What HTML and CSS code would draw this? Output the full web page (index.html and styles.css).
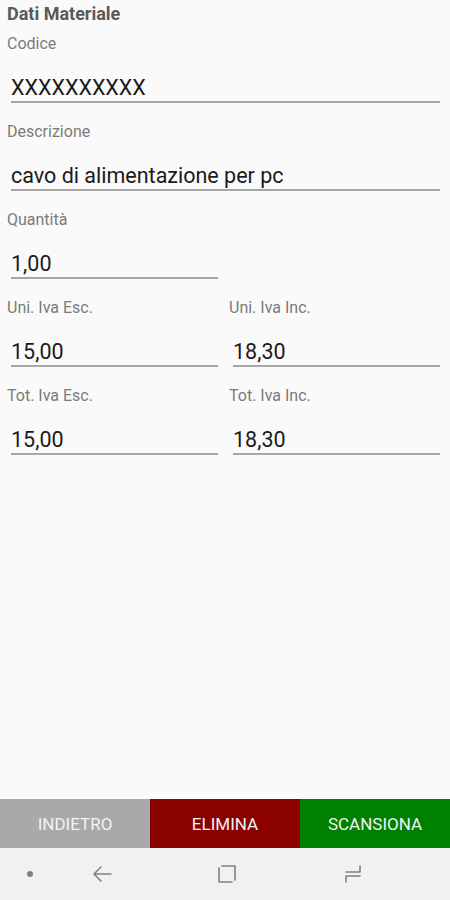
FILE: index.html
```html
<!DOCTYPE html>
<html lang="it">

<head>
    <meta charset="UTF-8">
    <meta name="viewport" content="width=device-width, initial-scale=1.0">
    <title>Dati Materiale</title>
    <link rel="stylesheet" href="styles.css">
</head>

<body>
    <div class="screen">
        <div class="content">
            <h1 class="title">Dati Materiale</h1>

            <div class="field">
                <label>Codice</label>
                <div class="value">XXXXXXXXXX</div>
            </div>

            <div class="field">
                <label>Descrizione</label>
                <div class="value">cavo di alimentazione per pc</div>
            </div>

            <div class="row">
                <div class="field">
                    <label>Quantità</label>
                    <div class="value">1,00</div>
                </div>
                <div></div>
            </div>

            <div class="row">
                <div class="field">
                    <label>Uni. Iva Esc.</label>
                    <div class="value">15,00</div>
                </div>
                <div class="field">
                    <label>Uni. Iva Inc.</label>
                    <div class="value">18,30</div>
                </div>
            </div>

            <div class="row">
                <div class="field">
                    <label>Tot. Iva Esc.</label>
                    <div class="value">15,00</div>
                </div>
                <div class="field">
                    <label>Tot. Iva Inc.</label>
                    <div class="value">18,30</div>
                </div>
            </div>

            <div class="edge"></div>
        </div>

        <div class="actions">
            <button class="btn-back">INDIETRO</button>
            <button class="btn-delete">ELIMINA</button>
            <button class="btn-scan">SCANSIONA</button>
        </div>

        <div class="navbar">
            <span class="nav-dot"></span>
            <svg class="nav-icon nav-back" width="20" height="20" viewBox="0 0 20 20">
                <path d="M19 10H2M9 3l-7 7 7 7" fill="none" stroke="#808080" stroke-width="1.5" stroke-linecap="round" stroke-linejoin="round"/>
            </svg>
            <svg class="nav-icon nav-home" width="20" height="20" viewBox="0 0 20 20">
                <path d="M2 4V18H15M5 2H18V16" fill="none" stroke="#808080" stroke-width="1.6" stroke-linecap="round" stroke-linejoin="round"/>
            </svg>
            <svg class="nav-icon nav-recent" width="20" height="20" viewBox="0 0 20 20">
                <path d="M17 2V8H3M3 12H17M3 12V18" fill="none" stroke="#808080" stroke-width="1.6" stroke-linecap="round" stroke-linejoin="round"/>
            </svg>
        </div>
    </div>
</body>

</html>
```

FILE: styles.css
```css
* {
    box-sizing: border-box;
}

body {
    margin: 0;
    font-family: Roboto, "Liberation Sans", Arial, sans-serif;
    background-color: #fafafa;
}

.screen {
    display: flex;
    flex-direction: column;
    height: 900px;
}

.content {
    flex: 1;
    position: relative;
    padding: 4px 10px 0 7px;
}

.title {
    margin: 0 0 10px 0;
    font-size: 18px;
    font-weight: bold;
    color: #5a5a5a;
    line-height: 20px;
}

.field {
    display: flex;
    flex-direction: column;
    margin-bottom: 19px;
}

.field label {
    font-size: 16px;
    color: #7a7a7a;
    line-height: 20px;
}

.value {
    margin: 21px 0 0 4px;
    font-size: 21.5px;
    line-height: 26px;
    color: #1a1a1a;
    border-bottom: 2px solid #a6a6a6;
}

.row {
    display: grid;
    grid-template-columns: 1fr 1fr;
    gap: 11px;
}

.edge {
    position: absolute;
    top: 280px;
    right: -6px;
    width: 3px;
    height: 180px;
    border: 1px solid #dcdcdc;
    border-right: none;
    border-radius: 3px 0 0 3px;
}

.actions {
    display: grid;
    grid-template-columns: 1fr 1fr 1fr;
    height: 49px;
}

.actions button {
    border: none;
    color: #f2f2f2;
    font-family: Roboto, "Liberation Sans", Arial, sans-serif;
    font-size: 17px;
    cursor: pointer;
}

.btn-back {
    background-color: #a9a9a9;
}

.btn-delete {
    background-color: #8b0000;
}

.btn-scan {
    background-color: #008000;
}

.navbar {
    height: 52px;
    background-color: #f1f1f1;
    display: flex;
    align-items: center;
    padding-left: 27px;
}

.nav-dot {
    flex-shrink: 0;
    width: 6px;
    height: 6px;
    border-radius: 50%;
    background-color: #808080;
    margin-right: 59px;
}

.nav-icon {
    flex-shrink: 0;
    margin-right: 106px;
}

.nav-back {
    margin-right: 105px;
}

.nav-recent {
    margin-right: 0;
}
```
